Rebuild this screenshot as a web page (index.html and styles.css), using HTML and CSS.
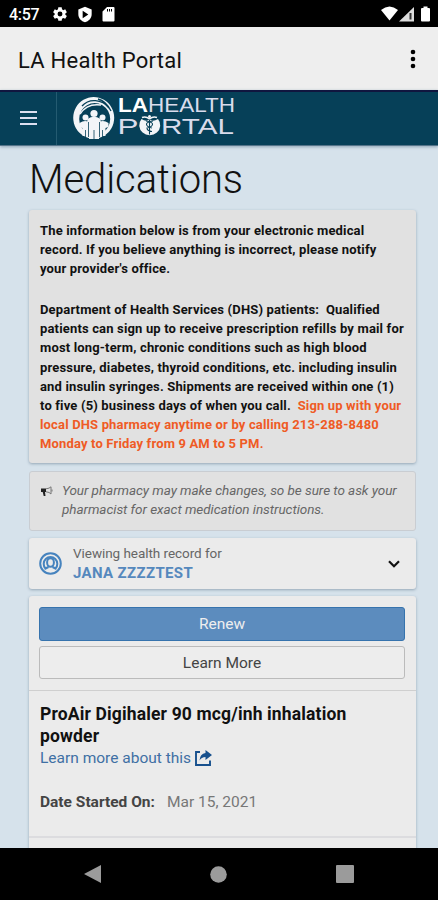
FILE: index.html
```
<!DOCTYPE html>
<html lang="en">
<head>
  <meta charset="UTF-8">
  <meta name="viewport" content="width=device-width, initial-scale=1.0">
  <title>LA Health Portal</title>
  <link rel="stylesheet" href="styles.css">
</head>
<body>

  <!-- Status bar -->
  <div class="status-bar">
    <span class="clock">4:57</span>
    <svg class="status-icon" width="16" height="16" viewBox="0 0 24 24"><path fill="#fff" fill-rule="evenodd" d="M9.5 2h5l.5 3 2 1.200 2.800-1.200 2.500 4.300-2.300 1.900v1.800l2.300 1.900-2.500 4.300-2.800-1.200-2 1.200-.5 3h-5l-.5-3-2-1.200-2.800 1.200-2.500-4.300L4 13V11.200L1.700 9.300 4.200 5 7 6.200 9 5zM12 8.300a3.700 3.700 0 1 0 0 7.400 3.700 3.700 0 0 0 0-7.400z"/></svg>
    <svg class="status-icon" width="16" height="17" viewBox="0 0 24 25"><path fill="#fff" fill-rule="evenodd" d="M12 1l10 4v7c0 6-4.500 10.500-10 12C6.500 22.500 2 18 2 12V5zM8.500 7v11l8.500-5.500z"/></svg>
    <svg class="status-icon" width="13" height="16" viewBox="0 0 13 16"><path fill="#fff" fill-rule="evenodd" d="M5 1h6.500a1 1 0 0 1 1 1v12.500a1 1 0 0 1-1 1h-10a1 1 0 0 1-1-1V5.500zM5 3v2.500h1V3zm2 0v2.500h1V3zm2 0v2.500h1V3z"/></svg>
    <svg class="signal" width="50" height="16" viewBox="0 0 50 16">
      <path fill="#fff" d="M0 4Q8.500-3 17 4L8.500 14.500z"/>
      <path fill="#ddd" d="M33 1v14.500H18z"/>
      <path fill="#333" d="M28.500 7h2v6.500h-2z"/>
      <path fill="#fff" d="M42.500.5h4V2H48a1 1 0 0 1 1 1v11.500a1 1 0 0 1-1 1h-7a1 1 0 0 1-1-1V3a1 1 0 0 1 1-1h1.500z"/>
    </svg>
  </div>

  <!-- App title -->
  <div class="app-bar">
    <span class="app-title">LA Health Portal</span>
    <svg width="6" height="20" viewBox="0 0 6 20"><circle cx="3" cy="3" r="2.300"/><circle cx="3" cy="10" r="2.300"/><circle cx="3" cy="17" r="2.300"/></svg>
  </div>

  <!-- Portal header -->
  <header class="header">
    <div class="menu"><span></span><span></span><span></span></div>
    <svg class="logo" width="166" height="48" viewBox="0 0 166 48">
      <path fill="#f3f5f8" fill-rule="evenodd" d="M21.700 3a20.500 20.800 0 1 0 .01 0zM22.700 9a15.500 16 0 1 1-.01 0z"/>
      <path fill="none" stroke="#064058" stroke-width="1.300" d="M10 12C17 4 30 5 37 14M26 5Q34 7 39 17"/>
      <path fill="none" stroke="#f3f5f8" stroke-width="1.500" d="M8 20Q15 9 29 11"/>
      <g fill="#f3f5f8">
        <circle cx="22" cy="19.500" r="3.600"/>
        <path d="M15.500 25q6.500-4.500 13 0l1 9-2.500 1V45H17V35l-2.500-1z"/>
        <circle cx="13.500" cy="23.500" r="3"/>
        <path d="M7.500 29q6-4 11 0v13H10.500v-8L7.500 33z"/>
        <circle cx="30.500" cy="23.500" r="3"/>
        <path d="M25.500 29q5-4 11 0v4l-3 1v8H25.500z"/>
      </g>
      <path fill="none" stroke="#064058" stroke-width=".8" d="M16.500 28v15M27.500 28v15M22 36v9M13.500 36v8M30.500 36v8"/>
      <text class="logo-text logo-bold" x="46" y="18" textLength="30" lengthAdjust="spacingAndGlyphs">LA</text>
      <text class="logo-text" x="76" y="18" textLength="87" lengthAdjust="spacingAndGlyphs">HEALTH</text>
      <text class="logo-text logo-big" x="45.500" y="40" textLength="21" lengthAdjust="spacingAndGlyphs">P</text>
      <text class="logo-text logo-big" x="89" y="40" textLength="73" lengthAdjust="spacingAndGlyphs">RTAL</text>
      <path fill="#f3f5f8" d="M69.500 25A10.500 10 0 1 0 86 25Q81 28 77.500 25.500 74 28 69.500 25z"/>
      <path fill="none" stroke="#f3f5f8" stroke-width="1.600" d="M70 23.500Q74 22 77.500 25 81 22 85 23.500"/>
      <circle cx="77.500" cy="22.500" r="1.500" fill="#f3f5f8"/>
      <path fill="none" stroke="#064058" stroke-width="1.100" d="M77.500 25.500v15M74 27q7 1 6.500 3.500T75 34q0 3 5 3.500M81 27q-7 1-6.500 3.500T80 34"/>
    </svg>
  </header>

  <main class="content">
    <h1>Medications</h1>

    <section class="card info">
      <p class="intro">The information below is from your electronic medical<br>record. If you believe anything is incorrect, please notify<br>your provider's office.</p>
      <p>Department of Health Services (DHS) patients:&nbsp; Qualified<br>patients can sign up to receive prescription refills by mail for<br>most long-term, chronic conditions such as high blood<br>pressure, diabetes, thyroid conditions, etc. including insulin<br>and insulin syringes. Shipments are received within one (1)<br>to five (5) business days of when you call.&nbsp; <span class="highlight">Sign up with your<br>local DHS pharmacy anytime or by calling 213-288-8480<br>Monday to Friday from 9 AM to 5 PM.</span></p>
    </section>

    <section class="card notice">
      <svg width="12" height="11" viewBox="0 0 12 11"><path fill="#222" d="M0 2.500h5V6H4l.5 4H2.700L1.700 6H0z"/><path fill="none" stroke="#777" d="M5 2.800Q8.500 2.500 10 .8V8Q8.500 6 5 5.800M11 3.500v2"/></svg>
      <p>Your pharmacy may make changes, so be sure to ask your<br>pharmacist for exact medication instructions.</p>
    </section>

    <section class="card record">
      <svg width="23" height="23" viewBox="0 0 23 23" fill="none" stroke="#4683be" stroke-width="2"><circle cx="11.500" cy="11.500" r="10.300"/><ellipse cx="11.500" cy="10.500" rx="3.400" ry="4.300"/><path d="M6.500 16.500A6.800 6.800 0 1 1 16.500 16.500M5.500 17l4-2M17.500 17l-4-2"/></svg>
      <div class="record-text">
        <p class="viewing">Viewing health record for</p>
        <p class="patient">JANA ZZZZTEST</p>
      </div>
      <svg width="12" height="8" viewBox="0 0 12 8"><path fill="none" stroke="#111" stroke-width="2.200" d="M1 1.200l5 5 5-5"/></svg>
    </section>

    <section class="card meds">
      <div class="actions">
        <button class="btn primary">Renew</button>
        <button class="btn">Learn More</button>
      </div>
      <div class="med">
        <h2>ProAir Digihaler 90 mcg/inh inhalation<br>powder</h2>
        <a class="more" href="#"><span>Learn more about this</span>
          <svg width="17" height="16" viewBox="0 0 17 16"><path fill="none" stroke="#17508d" stroke-width="1.900" d="M5 2H1v13h14v-4.500"/><path fill="#17508d" d="M10.500 0L17 5l-6.500 5V7Q6.500 7 4.500 10.500 5 3.500 10.500 3z"/></svg>
        </a>
        <p class="started"><b>Date Started On:</b><span>Mar 15, 2021</span></p>
      </div>
    </section>
  </main>

  <!-- Android navigation -->
  <nav class="nav-bar">
    <svg width="17" height="18" viewBox="0 0 17 18"><path d="M17 0v18L0 9z"/></svg>
    <svg width="17" height="17" viewBox="0 0 17 17"><circle cx="8.500" cy="8.500" r="8.300"/></svg>
    <svg width="18" height="18" viewBox="0 0 18 18"><rect width="18" height="18" rx="1"/></svg>
  </nav>

</body>
</html>
```
FILE: styles.css
```
* { margin: 0; padding: 0; box-sizing: border-box; }
body {
  width: 438px;
  height: 900px;
  overflow: hidden;
  display: flex;
  flex-direction: column;
  font-family: Roboto, sans-serif;
  background: #d6e2eb;
  color: #111;
}
svg { display: block; flex-shrink: 0; }

/* Status bar */
.status-bar { height: 27px; flex-shrink: 0; background: #000; color: #fff; display: flex; align-items: center; padding: 1px 8px 0 9px; }
.clock { width: 43px; font-size: 16px; font-weight: 500; letter-spacing: -0.3px; }
.status-icon { margin-right: 9px; }
.signal { margin-left: auto; margin-right: -1px; }

/* App title */
.app-bar { height: 63px; flex-shrink: 0; background: #eee; display: flex; align-items: center; justify-content: space-between; padding: 3px 22px 2px 18px; }
.app-title { font-size: 22px; padding-top: 2px; letter-spacing: 0.25px; }

/* Portal header */
.header { height: 56px; flex-shrink: 0; background: #064058; border-top: 2px solid #10163f; border-bottom: 1px solid #55758a; display: flex; box-shadow: 0 1px 3px #8fa5b6; }
.menu { width: 57px; border-right: 1px solid #245b71; display: flex; flex-direction: column; gap: 4px; padding: 19px 0 0 20px; }
.menu span { width: 17px; height: 2px; background: #dcdff0; }
.logo { margin: 2px 0 0 15px; overflow: visible; }
.logo-text { font-family: "Liberation Sans", sans-serif; font-size: 19.500px; fill: #d9dcec; }
.logo-bold { font-weight: bold; fill: #fff; }
.logo-big { font-size: 22.500px; }

/* Page content */
.content { flex: 1; min-height: 0; overflow: hidden; padding: 0 22px 0 29px; }
h1 { height: 64px; font-size: 40px; font-weight: 300; line-height: 67px; letter-spacing: -0.1px; }
.card { background: #ebebeb; border-radius: 3px; box-shadow: 0 1px 3px #93a6b5; }

.info { height: 253px; padding: 11px; background: #e1e1e1; font-size: 13px; font-weight: 700; line-height: 19.1px; letter-spacing: 0.16px; white-space: nowrap; }
.intro { margin-bottom: 22px; }
.highlight { color: #ef5b25; }

.notice { height: 60px; margin-top: 8px; padding: 9px 11px; background: #e1e1e1; border: 1px solid #c9cdd2; box-shadow: none; display: flex; font-size: 13.500px; font-style: italic; line-height: 19px; letter-spacing: -0.05px; color: #666; white-space: nowrap; }
.notice svg { margin: 5px 9px 0 0; }

.record { height: 51px; margin-top: 7px; padding: 0 16px 0 10px; display: flex; align-items: center; }
.record-text { flex: 1; margin-left: 11px; }
.viewing { font-size: 13.500px; line-height: 19px; letter-spacing: -0.05px; color: #666; }
.patient { font-size: 15px; font-weight: 700; line-height: 21px; letter-spacing: 0.35px; color: #5588bd; }

.meds { height: 270px; margin-top: 7px; }
.actions { height: 95px; padding: 11px 11px 0 10px; border-bottom: 1px solid #cfcfcf; }
.btn { display: block; width: 100%; height: 33px; margin-bottom: 6px; border: 1px solid #bbb; border-radius: 3px; background: #ededed; font-family: inherit; font-size: 15.500px; color: #444; }
.primary { height: 34px; margin-bottom: 5px; background: #5c8cbe; border-color: #3673ad; color: #eee; }

.med { height: 147px; padding: 12px 11px 0; border-bottom: 2px solid #dcdcdf; }
h2 { font-size: 17.500px; font-weight: 700; line-height: 22px; letter-spacing: 0.15px; white-space: nowrap; }
.more { display: flex; align-items: center; gap: 4px; height: 22px; font-size: 15.500px; color: #3f70a4; text-decoration: none; }
.started { display: flex; gap: 12px; margin-top: 23px; font-size: 15.500px; line-height: 20px; color: #777; }
.started b { font-weight: 700; color: #444; }

/* Android navigation */
.nav-bar { height: 52px; flex-shrink: 0; background: #000; fill: #9b9b9b; display: flex; justify-content: space-between; align-items: center; padding: 0 84px; }
```
